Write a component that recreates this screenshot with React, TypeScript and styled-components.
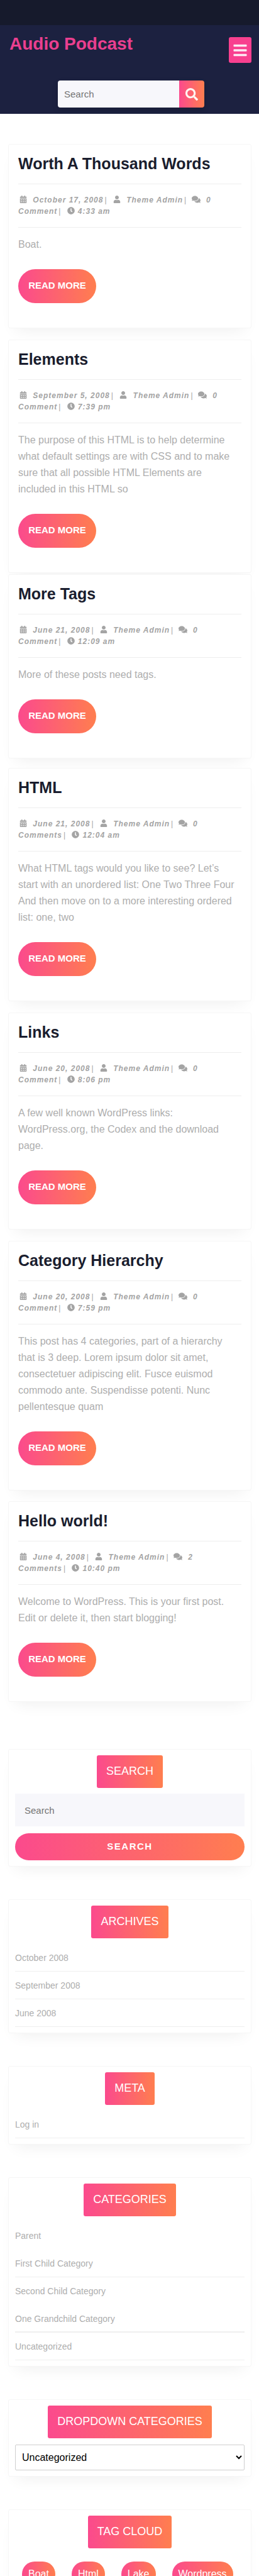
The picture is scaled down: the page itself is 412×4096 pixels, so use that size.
import React from "react";
import styled, { createGlobalStyle } from "styled-components";
import { FaBars, FaSearch, FaCalendarAlt, FaUser, FaComments, FaClock } from "react-icons/fa";

const Global = createGlobalStyle`
  html, body { margin: 0; padding: 0; background: #fff; }
  body { font-family: "Liberation Sans", Arial, sans-serif; }
  #root { height: 4096px; overflow: hidden; }
  * { box-sizing: border-box; }
`;

const gradient = "linear-gradient(to right, #fb4a8d, #ff7e4f)";

const TopStrip = styled.div`height: 40px; background: #161a2c;`;
const Header = styled.header`background: #1c2140; height: 141px; padding: 19px 12px 0 15px;`;
const HeaderRow = styled.div`display: flex; justify-content: space-between; align-items: flex-start; height: 69px;`;
const Logo = styled.h1`margin: 0; font-size: 28px; line-height: 22px; font-weight: 700; color: #ea3f8f;`;
const MenuButton = styled.button`
  width: 36px; height: 41px; border: 0; border-radius: 3px; padding: 0; background: #f8408f; color: #fdeaf3;
  display: flex; align-items: center; justify-content: center; font-size: 24px;
`;
const HeaderSearch = styled.form`
  display: flex; width: 233px; height: 43px; margin: 0 auto; transform: translateX(1px); border-radius: 4px; overflow: hidden;
  box-shadow: 0 4px 10px rgba(0,0,0,.15);
`;
const HeaderInput = styled.input`
  flex: 1; min-width: 0; border: 0; background: #f7f7fb; padding: 0 10px; font: 15px "Liberation Sans", sans-serif;
  &::placeholder { color: #757575; opacity: 1; }
`;
const HeaderSearchBtn = styled.button`
  width: 40px; border: 0; padding: 0; background: ${gradient}; color: #fff6f2; font-size: 20px;
  display: flex; align-items: center; justify-content: center;
`;

const Main = styled.main`padding: 48px 12px 0 13px;`;
const Card = styled.article<{ $gap: number }>`
  background: #fff; border: 1px solid #f6f6f6; border-radius: 3px; padding: 15px 15px 39px;
  margin-bottom: ${(p) => p.$gap}px;
  box-shadow: 0 14px 24px -12px rgba(0,0,0,.07);
`;
const PostTitle = styled.h2`
  margin: 0; padding-bottom: 17px; font-size: 25px; line-height: 30px; font-weight: 700; color: #1a1d2e;
  border-bottom: 1px solid #eeeeee;
`;
const Meta = styled.div`
  padding: 16px 0; font-size: 12px; line-height: 18px; font-weight: 700; font-style: italic; letter-spacing: 1px;
  color: #a4a4a4; border-bottom: 1px solid #eeeeee;
  svg { vertical-align: -1px; font-size: 12px; margin-right: 5px; color: #a4a4a4; }
`;
const CalendarIcon = styled(FaCalendarAlt)`margin-left: 2px;`;
const CommentsIcon = styled(FaComments)`
  margin-left: -2px; width: 14px; height: 14px; vertical-align: -2px !important;
`;
const Sep = styled.span`font-style: normal; font-weight: 400; margin: 0 5px 0 2px;`;
const Excerpt = styled.p`margin: 14px 0 0; padding-right: 5px; font-size: 16px; line-height: 26px; color: #aeaeae;`;
const ReadMore = styled.a`
  display: block; width: 124px; height: 54px; margin-top: 26px; border-radius: 27px; background: ${gradient};
  color: #fff; font-size: 15px; font-weight: 700; line-height: 51px; text-align: center;
`;

const Sidebar = styled.aside`padding: 75px 12px 0 13px;`;
const Widget = styled.section`
  background: #fff; border: 1px solid #f6f6f6; border-radius: 3px; padding: 9px 10px 9px; margin-bottom: 52px;
  box-shadow: 0 14px 24px -12px rgba(0,0,0,.07);
`;
const WidgetHead = styled.div`display: flex; justify-content: center;`;
const WidgetTitle = styled.h3`
  margin: 0; padding: 14px 15px 16px; font-size: 18px; line-height: 22px; font-weight: 400; color: #fff;
  border-radius: 3px; background: ${gradient};
`;
const WidgetInput = styled.input`
  display: block; width: 100%; height: 52px; margin-top: 9px; border: 0; background: #f7f7fb; padding: 0 15px;
  font: 15px "Liberation Sans", sans-serif;
  &::placeholder { color: #757575; opacity: 1; }
`;
const WidgetButton = styled.button`
  display: block; width: 100%; height: 43px; margin-top: 11px; border: 0; border-radius: 22px; background: ${gradient};
  color: #fff; font: 700 15px "Liberation Sans", sans-serif; letter-spacing: 1.5px; padding: 0 0 3px;
`;
const List = styled.ul`list-style: none; margin: 9px 0 0; padding: 0;`;
const Row = styled.li<{ $border: number }>`
  height: 44px; line-height: 44px; font-size: 14px; color: #aeaeae;
  border-bottom: ${(p) => p.$border}px solid #efefef;
`;
const Select = styled.select`
  display: block; width: 100%; height: 41px; margin-top: 10px; padding: 0 6px; background: #fff; color: #000;
  border: 1px solid #cfcfcf; border-radius: 2px; font: 16px "Liberation Sans", sans-serif;
`;
const Tags = styled.div`display: flex; gap: 26px; margin: 21px 0 0 11px;`;
const Tag = styled.a`
  height: 40px; padding: 9px 10px 0; border-radius: 20px; background: ${gradient}; color: #fff; font-size: 16px; line-height: 22px;
`;

type Post = { title: string; date: string; comments: string; time: string; text: string; gap: number };

const posts: Post[] = [
  { title: "Worth A Thousand Words", date: "October 17, 2008", comments: "0 Comment", time: "4:33 am", text: "Boat.", gap: 18 },
  { title: "Elements", date: "September 5, 2008", comments: "0 Comment", time: "7:39 pm", text: "The purpose of this HTML is to help determine what default settings are with CSS and to make sure that all possible HTML Elements are included in this HTML so", gap: 2 },
  { title: "More Tags", date: "June 21, 2008", comments: "0 Comment", time: "12:09 am", text: "More of these posts need tags.", gap: 15 },
  { title: "HTML", date: "June 21, 2008", comments: "0 Comments", time: "12:04 am", text: "What HTML tags would you like to see? Let’s start with an unordered list: One Two Three Four And then move on to a more interesting ordered list: one, two", gap: 18 },
  { title: "Links", date: "June 20, 2008", comments: "0 Comment", time: "8:06 pm", text: "A few well known WordPress links: WordPress.org, the Codex and the download page.", gap: 18 },
  { title: "Category Hierarchy", date: "June 20, 2008", comments: "0 Comment", time: "7:59 pm", text: "This post has 4 categories, part of a hierarchy that is 3 deep. Lorem ipsum dolor sit amet, consectetuer adipiscing elit. Fusce euismod commodo ante. Suspendisse potenti. Nunc pellentesque quam", gap: 17 },
  { title: "Hello world!", date: "June 4, 2008", comments: "2 Comments", time: "10:40 pm", text: "Welcome to WordPress. This is your first post. Edit or delete it, then start blogging!", gap: 0 },
];

const PostCard = ({ post }: { post: Post }) => (
  <Card $gap={post.gap}>
    <PostTitle>{post.title}</PostTitle>
    <Meta>
      <CalendarIcon /> {post.date}<Sep>|</Sep> <FaUser /> Theme Admin<Sep>|</Sep> <CommentsIcon /> {post.comments}<Sep>|</Sep> <FaClock />{post.time}
    </Meta>
    <Excerpt>{post.text}</Excerpt>
    <ReadMore>READ MORE</ReadMore>
  </Card>
);

const Title = ({ children }: { children: React.ReactNode }) => (
  <WidgetHead><WidgetTitle>{children}</WidgetTitle></WidgetHead>
);

export default function App() {
  return (
    <>
      <Global />
      <TopStrip />
      <Header>
        <HeaderRow>
          <Logo>Audio Podcast</Logo>
          <MenuButton aria-label="Menu"><FaBars /></MenuButton>
        </HeaderRow>
        <HeaderSearch>
          <HeaderInput placeholder="Search" />
          <HeaderSearchBtn aria-label="Search"><FaSearch /></HeaderSearchBtn>
        </HeaderSearch>
      </Header>
      <Main>
        {posts.map((p) => <PostCard key={p.title} post={p} />)}
      </Main>
      <Sidebar>
        <Widget>
          <Title>SEARCH</Title>
          <WidgetInput placeholder="Search" />
          <WidgetButton>SEARCH</WidgetButton>
        </Widget>
        <Widget>
          <Title>ARCHIVES</Title>
          <List>
            <Row $border={1}>October 2008</Row>
            <Row $border={1}>September 2008</Row>
            <Row $border={1}>June 2008</Row>
          </List>
        </Widget>
        <Widget>
          <Title>META</Title>
          <List><Row $border={1}>Log in</Row></List>
        </Widget>
        <Widget>
          <Title>CATEGORIES</Title>
          <List>
            <Row $border={0}>Parent</Row>
            <Row $border={1}>First Child Category</Row>
            <Row $border={0}>Second Child Category</Row>
            <Row $border={2}>One Grandchild Category</Row>
            <Row $border={1}>Uncategorized</Row>
          </List>
        </Widget>
        <Widget>
          <Title>DROPDOWN CATEGORIES</Title>
          <Select defaultValue="u"><option value="u">Uncategorized</option></Select>
        </Widget>
        <Widget>
          <Title>TAG CLOUD</Title>
          <Tags>
            <Tag>Boat</Tag><Tag>Html</Tag><Tag>Lake</Tag><Tag>Wordpress</Tag>
          </Tags>
        </Widget>
      </Sidebar>
    </>
  );
}
